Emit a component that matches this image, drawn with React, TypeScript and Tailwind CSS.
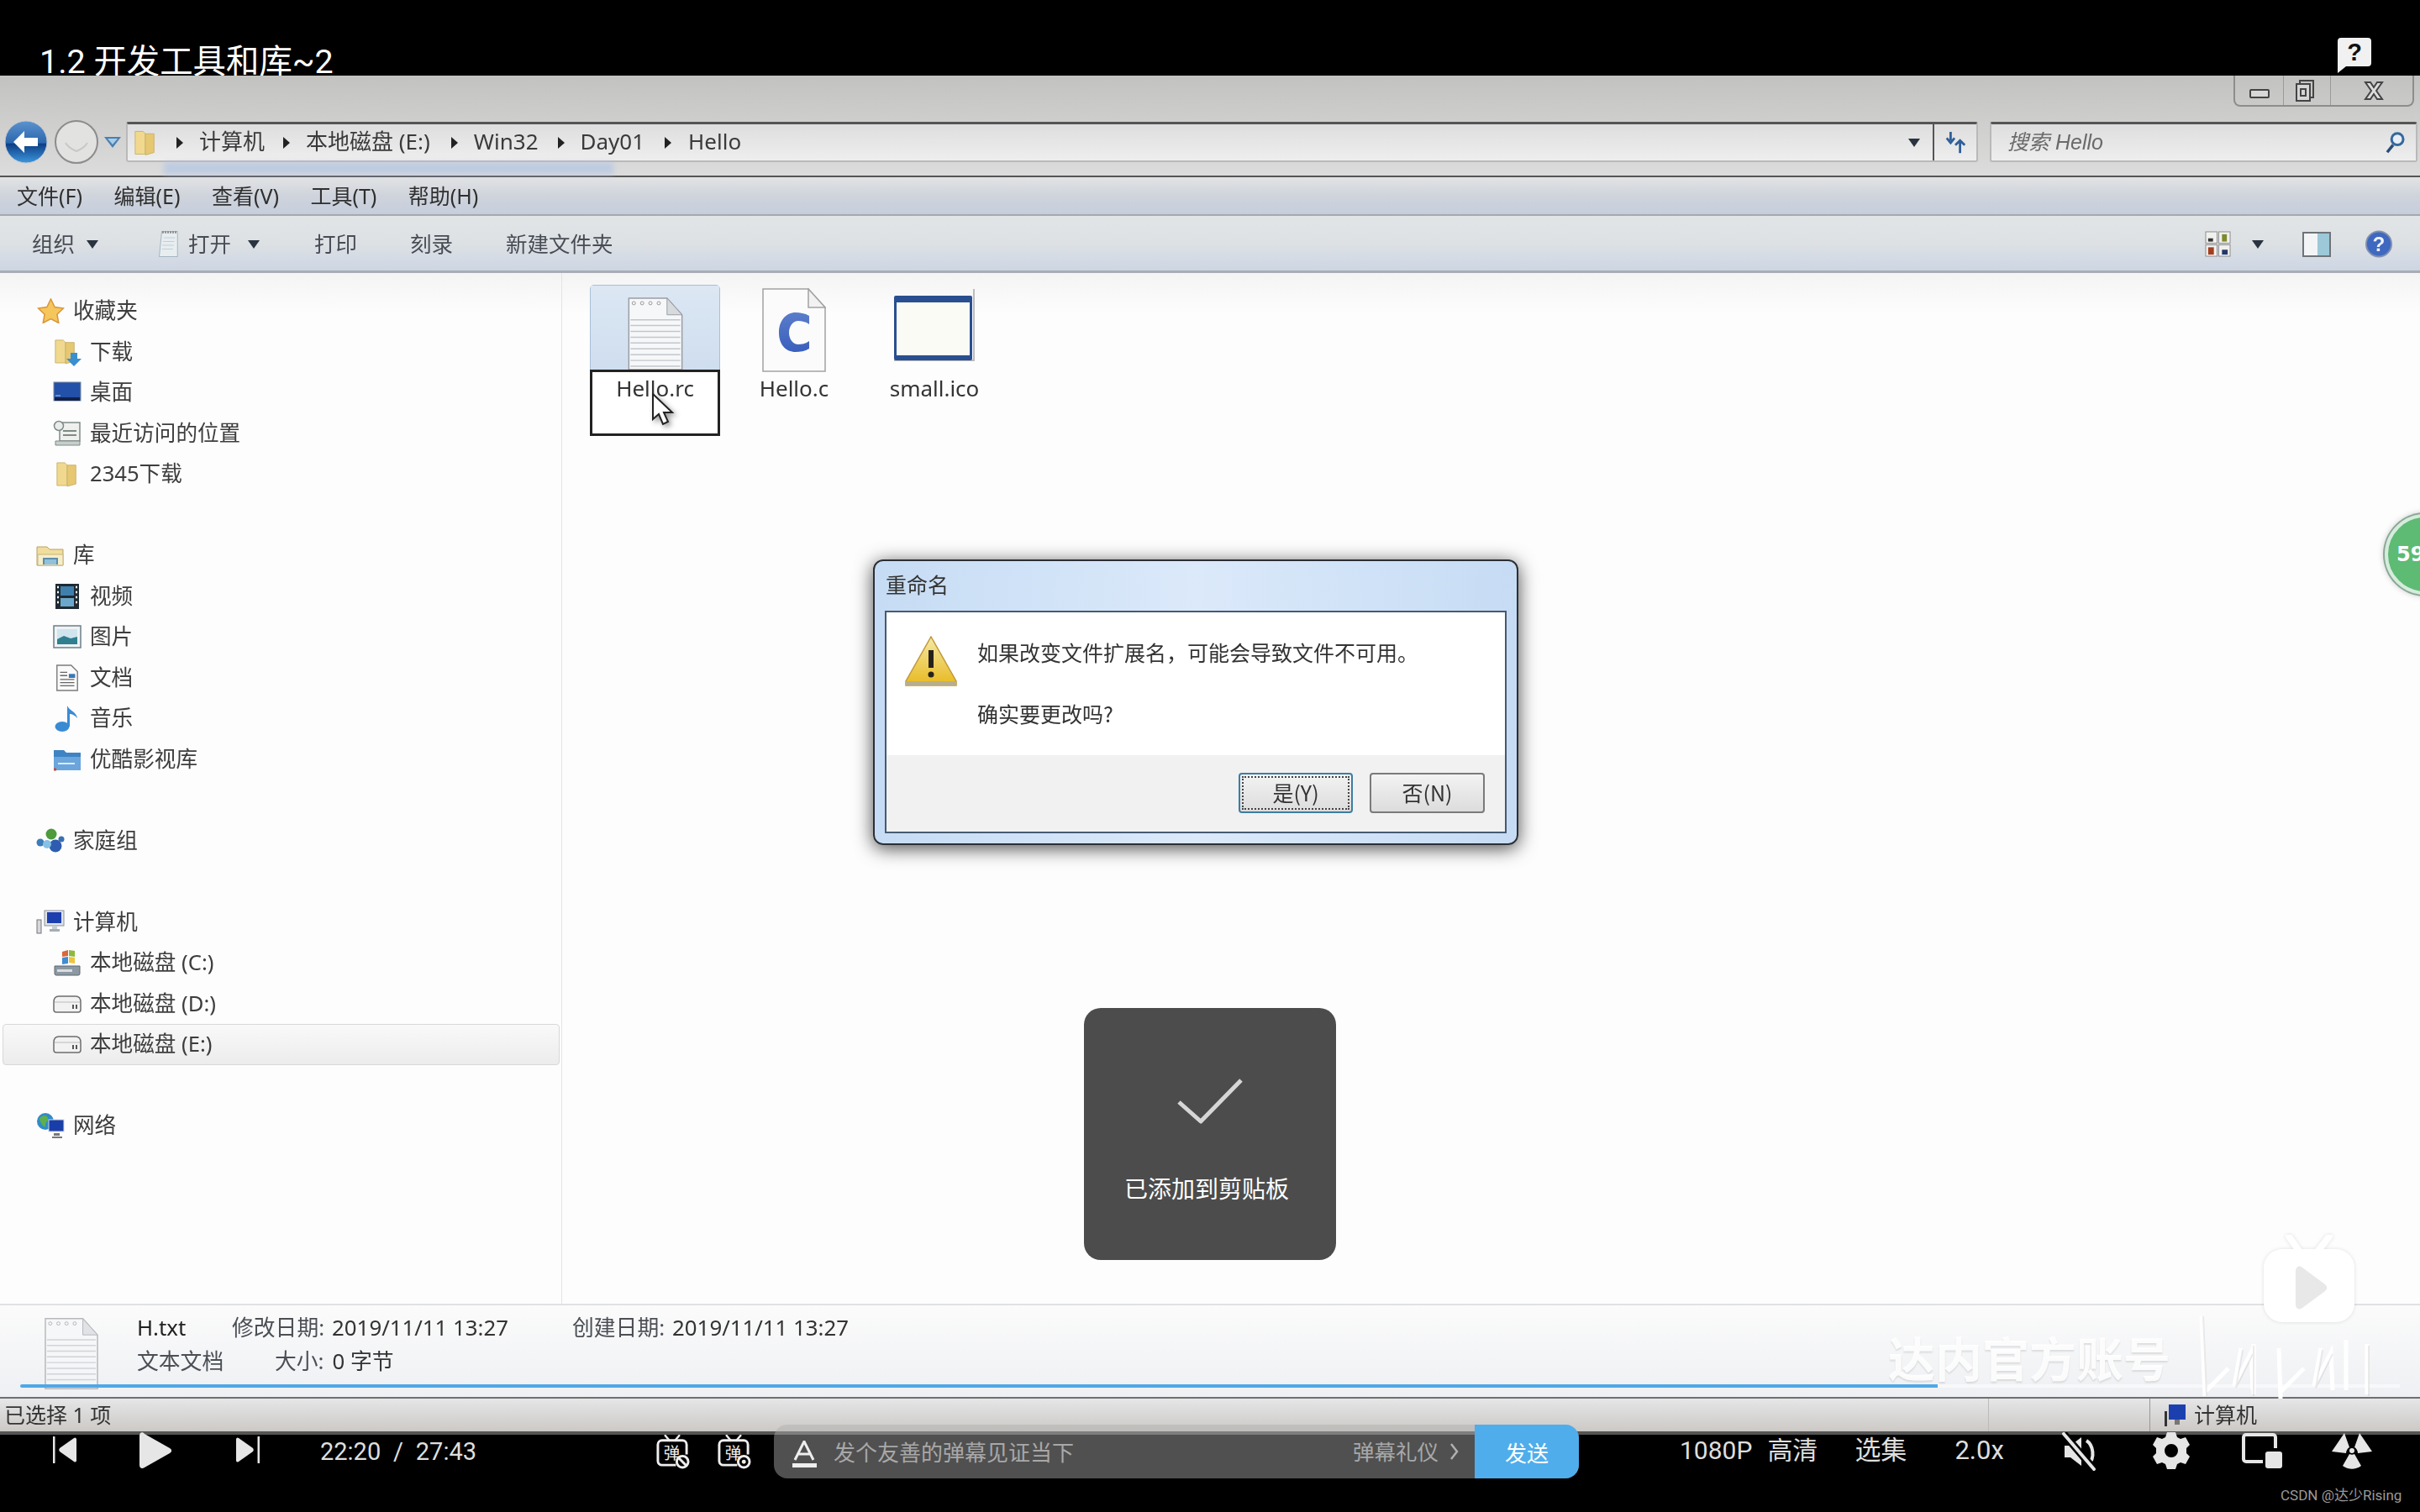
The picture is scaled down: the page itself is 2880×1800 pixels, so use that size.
import React from "react";

const Folder = ({ className = "" }: { className?: string }) => (
  <svg viewBox="0 0 30 34" className={className}>
    <path d="M2 3h10l3 3v26H2z" fill="#f0d98f" stroke="#c9b26a" />
    <path d="M15 6h11v24l-11 3z" fill="#e6c873" stroke="#c9b26a" />
  </svg>
);

const Star = () => (
  <svg viewBox="0 0 32 30" className="w-[33px] h-[30px]">
    <path d="M16 1l4.6 9.6 10.4 1.4-7.6 7.2 1.9 10.3L16 24.5l-9.3 5 1.9-10.3L1 12l10.4-1.4z" fill="#f5c65c" stroke="#d9953a" strokeWidth="1.5" />
  </svg>
);
const DownFolder = () => (
  <div className="relative w-[33px] h-[34px]">
    <Folder className="w-[28px] h-[32px]" />
    <svg viewBox="0 0 18 16" className="absolute right-0 bottom-0 w-[18px] h-[16px]"><path d="M5 0h8v7h5l-9 9-9-9h5z" fill="#3a8fd0" /></svg>
  </div>
);
const Desktop = () => (
  <svg viewBox="0 0 34 26" className="w-[34px] h-[26px]"><rect x="1" y="1" width="32" height="22" fill="#2350a8" stroke="#7a8aa0" /><rect x="2" y="19" width="30" height="4" fill="#10214d" /><path d="M3 17h6" stroke="#bcd" /></svg>
);
const Recent = () => (
  <svg viewBox="0 0 34 32" className="w-[34px] h-[32px]"><rect x="8" y="3" width="24" height="22" fill="#eef0ee" stroke="#7f8a86" strokeWidth="1.5" /><circle cx="7" cy="7" r="5.5" fill="#e8ecea" stroke="#7f8a86" strokeWidth="1.5" /><path d="M12 13h16M12 18h16" stroke="#7f8a86" strokeWidth="2" /><path d="M3 25h29v5H3z" fill="#c7cfcc" stroke="#7f8a86" /></svg>
);
const Library = () => (
  <svg viewBox="0 0 34 28" className="w-[34px] h-[28px]"><path d="M1 4h12l3 3h16v19H1z" fill="#f1dd9c" stroke="#b6a36a" /><path d="M2 13h30v13H2z" fill="#f6eecb" stroke="#c6b67c" /><path d="M9 25v-7h16v7" fill="#8fc1dd" stroke="#5c8faa" strokeWidth="2" /></svg>
);
const Film = () => (
  <svg viewBox="0 0 30 32" className="w-[30px] h-[32px]"><rect x="1" y="1" width="28" height="30" fill="#1f2a33" /><rect x="7" y="4" width="16" height="11" fill="#3f7fae" /><rect x="7" y="18" width="16" height="10" fill="#6ba7cb" /><path d="M3 5h2M3 11h2M3 17h2M3 23h2M25 5h2M25 11h2M25 17h2M25 23h2" stroke="#fff" strokeWidth="2.5" /></svg>
);
const Picture = () => (
  <svg viewBox="0 0 34 28" className="w-[34px] h-[28px]"><rect x="1" y="1" width="32" height="26" fill="#eef3f5" stroke="#6c7f88" strokeWidth="1.5" /><rect x="5" y="5" width="24" height="18" fill="#d0e5ee" /><path d="M5 17l8-4 8 3 8-2v9H5z" fill="#2f7f8f" /></svg>
);
const DocSmall = () => (
  <svg viewBox="0 0 28 34" className="w-[28px] h-[32px]"><path d="M1 1h18l8 8v24H1z" fill="#fafafa" stroke="#7c7c7c" strokeWidth="1.5" /><path d="M5 10h9M5 14h9M5 19h18M5 23h18M5 27h18" stroke="#666" strokeWidth="1.5" /><rect x="16" y="12" width="8" height="5" fill="#3a77b5" /></svg>
);
const Music = () => (
  <svg viewBox="0 0 30 34" className="w-[30px] h-[34px]"><ellipse cx="9" cy="27" rx="8.5" ry="6" fill="#3a8bd3" /><path d="M15 27V2c2 6 11 7 12 15-3-4-7-5-9-5v15z" fill="#3a8bd3" /></svg>
);
const BlueFolder = () => (
  <svg viewBox="0 0 34 28" className="w-[34px] h-[28px]"><path d="M1 6V3h12l3 3h17v21H1z" fill="#3e83c4" /><path d="M1 11h32v16H1z" fill="#6aa5dc" /><path d="M6 19h20" stroke="#dceaf8" strokeWidth="2" /><path d="M1 26h3" stroke="#c7483c" strokeWidth="3" /></svg>
);
const Home = () => (
  <svg viewBox="0 0 34 32" className="w-[34px] h-[32px]"><circle cx="5" cy="18" r="4.5" fill="#3b7db9" /><circle cx="18" cy="8" r="6.5" fill="#4f9a3d" /><circle cx="23" cy="22" r="7.5" fill="#2e5db0" /><circle cx="13" cy="20" r="5" fill="#86c0e4" /><circle cx="30" cy="14" r="3.5" fill="#3a6fb0" /></svg>
);
const Computer = () => (
  <svg viewBox="0 0 34 30" className="w-[34px] h-[30px]"><rect x="10" y="1" width="23" height="18" fill="#dfe3e8" stroke="#8a929c" /><rect x="13" y="3" width="17" height="13" fill="#1c3fb0" /><path d="M16 23h12v3H16z" fill="#a7adb5" /><path d="M19 19h6v4h-6z" fill="#c6ccd3" /><rect x="1" y="12" width="5" height="16" fill="#d5d8dc" stroke="#777" /></svg>
);
const DriveC = () => (
  <svg viewBox="0 0 34 32" className="w-[34px] h-[32px]"><path d="M2 20h30v9a2 2 0 01-2 2H4a2 2 0 01-2-2z" fill="#8c98a2" stroke="#5d6870" /><rect x="5" y="24" width="18" height="3" fill="#d8dde0" /><path d="M11 3l7-2v7l-7 1z" fill="#d9683a" /><path d="M19 1l7 1v7l-7-1z" fill="#8cb93f" /><path d="M11 10l7-1v8l-7 1z" fill="#3f8dd3" /><path d="M19 9l7 1v7l-7-1z" fill="#ecc43f" /></svg>
);
const Drive = () => (
  <svg viewBox="0 0 34 22" className="w-[34px] h-[22px]"><path d="M1 9c0-4 2-7 6-7h20c4 0 6 3 6 7v9a3 3 0 01-3 3H4a3 3 0 01-3-3z" fill="#f2f2f2" stroke="#6e6e6e" strokeWidth="1.5" /><path d="M2 9h30" stroke="#bbb" /><path d="M24 12v5M28 12v5" stroke="#555" strokeWidth="2" /></svg>
);
const Network = () => (
  <svg viewBox="0 0 34 32" className="w-[34px] h-[32px]"><circle cx="11" cy="11" r="10" fill="#2f8ccb" /><path d="M4 7c4-4 9-4 10 0s-4 5-3 9-6-1-7-9z" fill="#5fb04a" /><rect x="15" y="9" width="18" height="14" fill="#1a3ea8" stroke="#cfd6de" /><path d="M21 25h7v3h-7z" fill="#777" /><path d="M19 30h12" stroke="#777" strokeWidth="2" /></svg>
);

const Row = ({ indent, icon, label }: { indent?: boolean; icon: React.ReactNode; label: string }) => (
  <div className={indent ? "h-[48.5px] flex items-center pl-[62px]" : "h-[48.5px] flex items-center pl-[42px]"}>
    <div className="w-[36px] flex justify-center shrink-0">{icon}</div>
    <span className="ml-[9px] text-[25.6px] text-[#3d3d3d] whitespace-nowrap">{label}</span>
  </div>
);

const Gap = () => <div className="h-[48.5px]" />;

const Crumb = () => (
  <svg viewBox="0 0 8 14" className="w-[8px] h-[14px] shrink-0"><path d="M0 0l8 7-8 7z" fill="#222" /></svg>
);

const Caret = ({ className = "" }: { className?: string }) => (
  <svg viewBox="0 0 14 10" className={"w-[14px] h-[10px] shrink-0 " + className}><path d="M0 0h14L7 10z" fill="#2a3340" /></svg>
);

const NoteFile = ({ className = "" }: { className?: string }) => (
  <svg viewBox="0 0 66 88" className={className}>
    <path d="M1 2h46l18 20v66H1z" fill="#f6f7f8" stroke="#9a9da3" strokeWidth="1.5" />
    <path d="M47 2v20h18z" fill="#d7dadd" stroke="#9a9da3" />
    <path d="M3 28h60M3 35h60M3 42h60M3 49h60M3 56h60M3 63h60M3 70h60M3 77h60M3 84h60" stroke="#c2c6cc" strokeWidth="1.5" />
    <circle cx="7" cy="8" r="2" fill="none" stroke="#999" /><circle cx="17" cy="8" r="2" fill="none" stroke="#999" /><circle cx="27" cy="8" r="2" fill="none" stroke="#999" /><circle cx="37" cy="8" r="2" fill="none" stroke="#999" />
  </svg>
);

const CFile = () => (
  <svg viewBox="0 0 76 100" className="w-[76px] h-[100px]">
    <defs><linearGradient id="cf" x1="0" y1="0" x2="0" y2="1"><stop offset="0" stopColor="#5a7ccb" /><stop offset="1" stopColor="#3a5fbd" /></linearGradient></defs>
    <path d="M1 1h54l20 22v76H1z" fill="#fbfbfb" stroke="#a2a2a2" strokeWidth="1.5" />
    <path d="M55 1v22h20z" fill="#f2f2f2" stroke="#a2a2a2" strokeWidth="1.5" />
    <path d="M56 33c-5-3-11-4-16-4-12 0-20 10-20 24s8 23 20 23c5 0 11-1 16-4v-9c-4 3-9 4-13 4-6 0-11-6-11-14s5-14 11-14c4 0 9 1 13 4z" fill="url(#cf)" />
  </svg>
);

const WinIcon = () => (
  <div className="w-[96px] h-[86px] border-r-2 border-b-2 border-r-[#bdbdbd] border-b-[#bdbdbd]">
    <div className="w-[93px] h-[77px] mt-[8px] border-[3px] border-[#2a4f90] border-t-[8px] border-b-[6px] rounded-[2px] bg-[#fbfbf6]" />
  </div>
);

const Warn = () => (
  <svg viewBox="0 0 62 60" className="w-[62px] h-[60px]">
    <defs><linearGradient id="w" x1="0" y1="0" x2="0" y2="1"><stop offset="0" stopColor="#f5e9a8" /><stop offset="1" stopColor="#e8b91f" /></linearGradient></defs>
    <path d="M31 1L61 54v5H1v-5z" fill="url(#w)" stroke="#c09a3a" strokeWidth="1.5" />
    <path d="M1 54h60v5H1z" fill="#b8ad8c" />
    <path d="M28 17h6v21h-6z" fill="#26221a" /><circle cx="31" cy="46" r="3.5" fill="#26221a" />
  </svg>
);

const Danmu = ({ variant }: { variant: "off" | "on" }) => (
  <svg viewBox="0 0 42 42" className="w-[41px] h-[41px]">
    <path d="M12 1l5 6M29 1l-5 6" stroke="#eee" strokeWidth="2.5" strokeLinecap="round" />
    <path d="M25 37H8a5 5 0 01-5-5V12a5 5 0 015-5h25a5 5 0 015 5v12" fill="none" stroke="#eee" strokeWidth="3" />
    <text x="10" y="30" fontSize="20" fill="#eee" fontFamily="Noto Sans CJK SC">弹</text>
    <circle cx="33" cy="33" r="7" fill="#000" stroke="#eee" strokeWidth="3" />
    {variant === "off" ? <path d="M28 28l10 10" stroke="#eee" strokeWidth="3" /> : <circle cx="33" cy="33" r="2.5" fill="#eee" />}
  </svg>
);

export default function App() {
  return (
    <div className="relative w-[2880px] h-[1800px] overflow-hidden bg-black flex flex-col font-['Noto_Sans','Noto_Sans_CJK_SC',sans-serif]">
      {/* video title strip */}
      <div className="h-[90px] shrink-0 overflow-hidden flex justify-between">
        <div className="pl-[47px] pt-[48px] text-white text-[39.4px] leading-[52px] whitespace-nowrap font-['Roboto','Noto_Sans_CJK_SC',sans-serif]">1.2 开发工具和库~2</div>
        <div className="pt-[45px] pr-[58px]">
          <svg viewBox="0 0 40 42" className="w-[40px] h-[42px]">
            <path d="M4 0h32a4 4 0 014 4v26a4 4 0 01-4 4H10l-10 8V4a4 4 0 014-4z" fill="#f1f1f1" />
            <text x="20" y="27" textAnchor="middle" fontSize="29" fontWeight="700" fill="#111" fontFamily="Liberation Sans">?</text>
          </svg>
        </div>
      </div>

      {/* explorer window */}
      <div className="h-[1618px] shrink-0 flex flex-col blur-[0.6px] bg-white">
        {/* title + address */}
        <div className="relative h-[119px] shrink-0 bg-gradient-to-b from-[#c2c2c0] to-[#dcdcdc]">
          <div className="h-[55px] flex justify-end pr-[7px]">
            <div className="w-[215px] h-[37px] flex border-2 border-t-0 border-[#8d8d8d] rounded-b-[8px]">
              <div className="w-[58px] flex items-end justify-center pb-[8px] border-r border-[#9a9a9a]">
                <div className="w-[24px] h-[11px] border-2 border-[#444] rounded-[2px] bg-[#d8d8d8]" />
              </div>
              <div className="w-[56px] flex items-center justify-center border-r border-[#9a9a9a] pr-[6px]">
                <svg viewBox="0 0 24 26" className="w-[24px] h-[26px]"><path d="M6 5V1h16v20h-4" fill="none" stroke="#444" strokeWidth="2" /><rect x="2" y="5" width="16" height="20" fill="#d5d5d5" stroke="#444" strokeWidth="2" /><rect x="7" y="11" width="6" height="8" fill="none" stroke="#444" strokeWidth="2" /></svg>
              </div>
              <div className="flex-1 flex items-center justify-center pl-[4px]">
                <svg viewBox="0 0 24 22" className="w-[24px] h-[22px]"><path d="M2 1h6l4 6 4-6h6l-7 10 7 10h-6l-4-6-4 6H2l7-10z" fill="#dcdcdc" stroke="#444" strokeWidth="2" /></svg>
              </div>
            </div>
          </div>
          <div className="h-[48px] flex items-center pl-[6px] pr-[3px]">
            <svg viewBox="0 0 112 52" className="w-[112px] h-[52px] shrink-0">
              <defs><linearGradient id="bk" x1="0" y1="0" x2="0" y2="1"><stop offset="0" stopColor="#5c93cf" /><stop offset="0.52" stopColor="#2c67ad" /><stop offset="0.55" stopColor="#0d3f86" /><stop offset="1" stopColor="#3d96dc" /></linearGradient></defs>
              <circle cx="85" cy="26" r="25" fill="#e2e2e0" stroke="#8c8c8c" strokeWidth="2" />
              <path d="M72 27c4 7 9 8 13 10 4-2 9-3 13-10" fill="none" stroke="#c8c8c8" strokeWidth="2" />
              <circle cx="25" cy="26" r="25" fill="url(#bk)" stroke="#c2c6cc" strokeWidth="1" />
              <path d="M10 26l13-13v8h16v10H23v8z" fill="#fff" />
            </svg>
            <svg viewBox="0 0 20 13" className="w-[20px] h-[13px] ml-[6px] mr-[6px] shrink-0"><path d="M0 0h20L10 13z" fill="#4a7fb0" /><path d="M4 2h12l-6 7z" fill="#a7cdea" /></svg>
            <div className="flex-1 h-[48px] flex items-center border-2 border-t-[3px] border-[#b9b9b9] border-t-[#555] bg-gradient-to-b from-[#dedede] to-[#eeeeee] rounded-[3px] pl-[7px] text-[26px] text-[#3a3a3a]">
              <Folder className="w-[28px] h-[33px] shrink-0" />
              <div className="flex items-center whitespace-nowrap ml-[23px]">
                <Crumb /><span className="ml-[19px] pb-[3px]">计算机</span>
              </div>
              <div className="flex items-center whitespace-nowrap ml-[22px]">
                <Crumb /><span className="ml-[19px] pb-[3px]">本地磁盘 (E:)</span>
              </div>
              <div className="flex items-center whitespace-nowrap ml-[25px]">
                <Crumb /><span className="ml-[19px] pb-[3px]">Win32</span>
              </div>
              <div className="flex items-center whitespace-nowrap ml-[23px]">
                <Crumb /><span className="ml-[19px] pb-[3px]">Day01</span>
              </div>
              <div className="flex items-center whitespace-nowrap ml-[24px]">
                <Crumb /><span className="ml-[20px] pb-[3px]">Hello</span>
              </div>
              <div className="flex-1" />
              <Caret className="mr-[15px]" />
              <div className="w-[52px] h-full flex items-center justify-center border-l-2 border-[#555]">
                <svg viewBox="0 0 30 30" className="w-[30px] h-[28px]"><path d="M9 1v11M4 9l5 6 5-6" fill="none" stroke="#2f5f98" strokeWidth="3" /><path d="M21 28V14M15 18l6-6 6 6" fill="none" stroke="#2f5f98" strokeWidth="3" /></svg>
              </div>
            </div>
            <div className="w-[509px] h-[48px] ml-[14px] shrink-0 flex items-center justify-between border-2 border-t-[3px] border-[#b9b9b9] border-t-[#555] bg-gradient-to-b from-[#dedede] to-[#eeeeee] rounded-[3px] pl-[19px] pr-[12px]">
              <span className="italic text-[25px] text-[#6a6a6a] font-['Liberation_Sans','Noto_Sans_CJK_SC',sans-serif]">搜索 Hello</span>
              <svg viewBox="0 0 26 30" className="w-[25px] h-[26px]"><circle cx="16" cy="10" r="8" fill="#e7eef5" stroke="#34689d" strokeWidth="3.5" /><path d="M10 18L2 28" stroke="#2a4c75" strokeWidth="4" /></svg>
            </div>
          </div>
          <div className="absolute left-[195px] top-[103px] w-[535px] h-[15px] blur-[3px] bg-[#abc3e6]/60" />
        </div>

        {/* menu bar */}
        <div className="h-[48px] shrink-0 flex items-center pl-[20px] pt-[2px] gap-[37.5px] border-t-2 border-b-2 border-t-[#555] border-b-[#a5a9b0] bg-gradient-to-b from-[#e2e3e4] via-[#cfd4dc] to-[#c6cedd] text-[25px] text-[#2f2f2f]">
          <span>文件(F)</span><span>编辑(E)</span><span>查看(V)</span><span>工具(T)</span><span>帮助(H)</span>
        </div>

        {/* command bar */}
        <div className="h-[68px] shrink-0 flex items-center pl-[38px] pr-[32px] pt-[2px] border-b-[3px] border-b-[#a9adb3] bg-gradient-to-b from-[#e2e5e6] via-[#dde1e4] to-[#cdd6e4] text-[25.5px] text-[#474c55]">
          <span>组织</span>
          <Caret className="ml-[14px]" />
          <svg viewBox="0 0 30 44" className="w-[30px] h-[33px] ml-[68px]"><path d="M5 2h25v40H1z" fill="#e8edf0" stroke="#8fa5b4" /><path d="M7 2v3M11 2v3M15 2v3M19 2v3M23 2v3M27 2v3" stroke="#444" strokeWidth="1.5" /><path d="M8 12h18M7 18h18M6 24h18M5 30h18" stroke="#b4c4d0" /></svg>
          <span className="ml-[9px]">打开</span>
          <Caret className="ml-[20px]" />
          <span className="ml-[65px]">打印</span>
          <span className="ml-[63px]">刻录</span>
          <span className="ml-[63px]">新建文件夹</span>
          <div className="flex-1" />
          <svg viewBox="0 0 32 32" className="w-[31px] h-[31px]"><rect x="1" y="1" width="14" height="14" fill="#f0f0ee" stroke="#8c8c8c" /><rect x="17" y="1" width="14" height="14" fill="#f0f0ee" stroke="#8c8c8c" /><rect x="1" y="17" width="14" height="14" fill="#f0f0ee" stroke="#8c8c8c" /><rect x="17" y="17" width="14" height="14" fill="#f0f0ee" stroke="#8c8c8c" /><rect x="4" y="9" width="6" height="4" fill="#333" /><rect x="21" y="4" width="6" height="9" fill="#7d8a2e" /><rect x="4" y="20" width="7" height="9" fill="#a33e1e" /><rect x="21" y="23" width="7" height="6" fill="#24386a" /></svg>
          <Caret className="ml-[25px]" />
          <div className="w-[34px] h-[30px] ml-[46px] flex border-2 border-[#6e7378] bg-[#f2f4f6]"><div className="flex-1" /><div className="w-[14px] bg-[#9cc8d8]" /></div>
          <svg viewBox="0 0 34 34" className="w-[34px] h-[33px] ml-[40px]"><circle cx="17" cy="17" r="15.5" fill="#3f68c0" stroke="#8090b0" strokeWidth="2" /><text x="17" y="26" textAnchor="middle" fontSize="25" fontWeight="700" fill="#eef2fa" fontFamily="Liberation Sans">?</text></svg>
        </div>

        {/* main */}
        <div className="h-[1227px] shrink-0 flex bg-gradient-to-b from-[#f4f4f4] via-[#fdfdfd] via-[4%] to-[#fdfdfd]">
          <div className="w-[669px] shrink-0 pt-[21px] border-r border-[#e4e4e4] relative">
            <Row icon={<Star />} label="收藏夹" />
            <Row indent icon={<DownFolder />} label="下载" />
            <Row indent icon={<Desktop />} label="桌面" />
            <Row indent icon={<Recent />} label="最近访问的位置" />
            <Row indent icon={<Folder className="w-[28px] h-[32px]" />} label="2345下载" />
            <Gap />
            <Row icon={<Library />} label="库" />
            <Row indent icon={<Film />} label="视频" />
            <Row indent icon={<Picture />} label="图片" />
            <Row indent icon={<DocSmall />} label="文档" />
            <Row indent icon={<Music />} label="音乐" />
            <Row indent icon={<BlueFolder />} label="优酷影视库" />
            <Gap />
            <Row icon={<Home />} label="家庭组" />
            <Gap />
            <Row icon={<Computer />} label="计算机" />
            <Row indent icon={<DriveC />} label="本地磁盘 (C:)" />
            <Row indent icon={<Drive />} label="本地磁盘 (D:)" />
            <div className="ml-[3px] mr-[2px] rounded-[4px] border border-[#d8d8d8] bg-gradient-to-b from-[#f9f9f9] to-[#ececec]">
              <div className="h-[46.5px] flex items-center pl-[58px]">
                <div className="w-[36px] flex justify-center shrink-0"><Drive /></div>
                <span className="ml-[9px] text-[25.6px] text-[#3d3d3d] whitespace-nowrap">本地磁盘 (E:)</span>
              </div>
            </div>
            <Gap />
            <Row icon={<Network />} label="网络" />
          </div>
          <div className="flex-1 flex items-start pl-[33px] pt-[14px]">
            <div className="w-[155px] h-[180px] flex flex-col rounded-t-[5px] border-t border-x border-[#a9bfd8]">
              <div className="h-[100px] shrink-0 bg-gradient-to-b from-[#dce7f3] to-[#cfdeef] flex justify-center items-end">
                <NoteFile className="w-[66px] h-[87px]" />
              </div>
              <div className="flex-1 -mx-px border-[3px] border-[#222] bg-white flex justify-center pt-px text-[26px] leading-[36px] text-[#333]">Hello.rc</div>
            </div>
            <div className="w-[100px] ml-[38px] pt-[4px] flex flex-col items-center text-[26px] leading-[36px] text-[#333]">
              <CFile />
              <span className="mt-px">Hello.c</span>
            </div>
            <div className="w-[130px] ml-[52px] pt-[5px] flex flex-col items-center text-[26px] leading-[36px] text-[#333]">
              <WinIcon />
              <span className="mt-[14px]">small.ico</span>
            </div>
          </div>
        </div>

        {/* details pane */}
        <div className="h-[111px] shrink-0 relative flex border-t-2 border-[#dfe1e4] bg-gradient-to-b from-[#fbfbfb] to-[#eef0f3] text-[25.8px] text-[#4b4f55]">
          <NoteFile className="w-[64px] h-[87px] ml-[53px] mt-[13px] shrink-0 opacity-70" />
          <div className="ml-[46px] pt-[9px] flex flex-col gap-[6px] leading-[34px] whitespace-nowrap">
            <div className="flex">
              <span className="w-[113px] text-[#222]">H.txt</span>
              <span>修改日期:</span>
              <span className="ml-[9px] text-[#333]">2019/11/11 13:27</span>
              <span className="ml-[76px]">创建日期:</span>
              <span className="ml-[9px] text-[#333]">2019/11/11 13:27</span>
            </div>
            <div className="flex">
              <span className="w-[164px]">文本文档</span>
              <span>大小:</span>
              <span className="ml-[10px] text-[#333]">0 字节</span>
            </div>
          </div>
          <div className="absolute left-[24px] top-[94px] w-[2832px] h-[4px] flex">
            <div className="w-[2282px] bg-[#4fa8e6] rounded-l-full" />
            <div className="flex-1 bg-white/50" />
          </div>
        </div>

        {/* status bar */}
        <div className="h-[45px] shrink-0 flex items-center border-t-2 border-b-[4px] border-t-[#6f6f6f] border-b-[#555] bg-gradient-to-b from-[#e6e6e8] to-[#ccc9c5] text-[25px] text-[#333] whitespace-nowrap">
          <span className="pl-[5px] w-[2366px]">已选择 1 项</span>
          <div className="h-full w-[192px] border-l border-[#bbb]" />
          <div className="h-full flex items-center gap-[9px] border-l border-[#999] pl-[17px]">
            <svg viewBox="0 0 26 30" className="w-[26px] h-[30px]"><rect x="5" y="2" width="20" height="18" fill="#1c3fb0" /><path d="M12 20h6v6h-6z" fill="#777" /><rect x="0" y="10" width="3" height="18" fill="#333" /></svg>
            <span>计算机</span>
          </div>
        </div>
      </div>

      {/* player controls */}
      <div className="relative z-10 h-[92px] shrink-0 flex items-start text-[#dedede] font-['Roboto','Noto_Sans_CJK_SC',sans-serif] whitespace-nowrap">
        <svg viewBox="0 0 30 32" className="w-[30px] h-[32px] ml-[63px] mt-[2px] shrink-0"><path d="M1 1v30" stroke="#e6e6e6" strokeWidth="3" strokeLinecap="round" /><path d="M28 3v26a2 2 0 01-3 1L8 18a3 3 0 010-4L25 2a2 2 0 013 1z" fill="#e6e6e6" /></svg>
        <svg viewBox="0 0 38 44" className="w-[38px] h-[44px] ml-[73px] -mt-[3px] shrink-0"><path d="M0 4c0-4 4-5 6-2l30 17c3 2 3 4 0 6L6 42c-3 2-6 1-6-3z" fill="#e6e6e6" /></svg>
        <svg viewBox="0 0 30 32" className="w-[30px] h-[32px] ml-[75px] mt-[2px] shrink-0"><path d="M29 1v30" stroke="#e6e6e6" strokeWidth="3" strokeLinecap="round" /><path d="M2 3v26a2 2 0 003 1l17-12a3 3 0 000-4L5 2a2 2 0 00-3 1z" fill="#e6e6e6" /></svg>
        <div className="ml-[72px] w-[186px] mt-[1px] text-[29px] leading-[38px] flex justify-between shrink-0"><span>22:20</span><span>/</span><span>27:43</span></div>
        <div className="ml-[213px] shrink-0"><Danmu variant="off" /></div>
        <div className="ml-[32px] shrink-0"><Danmu variant="on" /></div>
        <div className="ml-[27px] w-[958px] h-[64px] -mt-[12px] shrink-0 rounded-[16px] overflow-hidden flex items-center bg-[rgba(175,175,175,0.46)]">
          <div className="ml-[22px] w-[29px] h-[32px] mt-[6px] shrink-0">
            <svg viewBox="0 0 29 32" className="w-[29px] h-[32px]"><path d="M3 23L14 1l11 22M7 16h15" fill="none" stroke="#eee" strokeWidth="3" /><rect x="0" y="27" width="29" height="5" fill="#eee" /></svg>
          </div>
          <span className="ml-[20px] -mt-px text-[26px] text-[#a8a8a8] font-['Noto_Sans_CJK_SC',sans-serif]">发个友善的弹幕见证当下</span>
          <div className="flex-1" />
          <span className="-mt-px text-[25.5px] text-[#a8a8a8] font-['Noto_Sans_CJK_SC',sans-serif]">弹幕礼仪</span>
          <svg viewBox="0 0 10 20" className="w-[10px] h-[20px] ml-[14px] mr-[19px]"><path d="M1 1l7 9-7 9" fill="none" stroke="#b0b0b0" strokeWidth="2.5" /></svg>
          <div className="w-[124px] h-full bg-[#4fadeb] flex items-center justify-center text-white text-[26px] font-['Noto_Sans_CJK_SC',sans-serif]">发送</div>
        </div>
        <div className="ml-[120px] text-[30px] leading-[38px] shrink-0">1080P<span className="ml-[18px]">高清</span></div>
        <span className="ml-[44px] text-[31px] leading-[38px] shrink-0">选集</span>
        <span className="ml-[57px] text-[31px] leading-[38px] shrink-0">2.0x</span>
        <svg viewBox="0 0 42 46" className="w-[42px] h-[46px] ml-[69px] -mt-[3px] shrink-0">
          <path d="M4 16h7l13-10v34L11 30H4z" fill="#e6e6e6" transform="translate(-1 0)" />
          <path d="M29 10c8 5 11 21 2 28" fill="none" stroke="#e6e6e6" strokeWidth="4" />
          <path d="M2 2l36 42" stroke="#000" strokeWidth="9" />
          <path d="M2 2l36 42" stroke="#e6e6e6" strokeWidth="4" strokeLinecap="round" />
        </svg>
        <svg viewBox="0 0 46 44" className="w-[46px] h-[44px] ml-[65px] -mt-[3px] shrink-0">
          <path fillRule="evenodd" d="M18 0h10l2 6 4 2 6-2 5 9-4 4v6l4 4-5 9-6-2-4 2-2 6H18l-2-6-4-2-6 2-5-9 4-4v-6l-4-4 5-9 6 2 4-2zM23 14a8 8 0 100 16 8 8 0 000-16z" fill="#e6e6e6" />
        </svg>
        <svg viewBox="0 0 48 42" className="w-[48px] h-[42px] ml-[61px] -mt-[2px] shrink-0">
          <path d="M40 18V5a3 3 0 00-3-3H5a3 3 0 00-3 3v26a3 3 0 003 3h20" fill="none" stroke="#e6e6e6" strokeWidth="4" />
          <rect x="28" y="22" width="20" height="20" rx="3" fill="#e6e6e6" />
        </svg>
        <svg viewBox="0 0 48 44" className="w-[48px] h-[44px] ml-[59px] -mt-[3px] shrink-0">
          <path d="M15 1L0 23l17 2c0-3 2-6 4-7zM33 1l15 22-17 2c0-3-2-6-4-7zM13 40c7 5 15 5 22 0l-8-14c-2 1-4 1-6 0z" fill="#e6e6e6" />
          <circle cx="24" cy="22" r="3" fill="#e6e6e6" />
        </svg>
      </div>

      {/* cursor */}
      <svg viewBox="0 0 30 42" className="absolute left-[775px] top-[468px] w-[30px] h-[42px] drop-shadow-[3px_3px_3px_rgba(0,0,0,0.4)]">
        <path d="M2 1v30l7-6 5 12 6-3-5-11h10z" fill="#fff" stroke="#222" strokeWidth="2" />
      </svg>

      {/* floating timer */}
      <div className="absolute left-[2838px] top-[612px] w-[96px] h-[96px] rounded-full bg-[#5dbb74] border-[4px] border-[#d5ecdc] shadow-[0_0_0_2px_#8aa895,0_0_8px_rgba(0,0,0,0.3)] flex items-center pl-[10px] overflow-hidden">
        <span className="text-white font-bold text-[24px] font-['DejaVu_Sans',sans-serif]">59</span>
      </div>

      {/* rename dialog */}
      <div className="absolute left-[1039px] top-[666px] w-[768px] h-[340px] rounded-[12px] border-2 border-[#2b2f35] bg-gradient-to-r from-[#c6dcf4] via-[#dbe9fa] to-[#c6dcf4] shadow-[0_4px_22px_rgba(0,0,0,0.7)] flex flex-col blur-[0.5px]">
        <div className="h-[59px] shrink-0 flex items-center pl-[13px] pb-[4px] text-[25px] text-[#333] font-['Noto_Sans_CJK_SC',sans-serif]">重命名</div>
        <div className="mx-[12px] flex-1 mb-[12px] border-2 border-[#465a72] bg-white flex flex-col font-['Noto_Sans_CJK_SC',sans-serif] text-[#333]">
          <div className="h-[170px] shrink-0 flex pl-[22px] pt-[28px]">
            <Warn />
            <div className="ml-[24px] text-[25px] leading-[34px] mt-[2px]">
              <div>如果改变文件扩展名，可能会导致文件不可用。</div>
              <div className="mt-[39px]">确实要更改吗?</div>
            </div>
          </div>
          <div className="flex-1 bg-[#f1f1f1] flex justify-end items-start pt-[21px] pr-[24px] gap-[20px] text-[25px]">
            <div className="w-[136px] h-[48px] rounded-[4px] border-2 border-[#3d7da3] bg-gradient-to-b from-[#f3f3f3] to-[#dcdcdc] p-[2px]">
              <div className="w-full h-full border-2 border-dotted border-[#444] flex items-center justify-center">是(Y)</div>
            </div>
            <div className="w-[137px] h-[48px] rounded-[4px] border-2 border-[#7a7a7a] bg-gradient-to-b from-[#f3f3f3] to-[#dcdcdc] flex items-center justify-center">否(N)</div>
          </div>
        </div>
      </div>

      {/* toast */}
      <div className="absolute left-[1290px] top-[1200px] w-[300px] h-[300px] rounded-[20px] bg-[#4c4c4c] flex flex-col items-center font-['Noto_Sans_CJK_SC',sans-serif]">
        <svg viewBox="0 0 78 54" className="w-[78px] h-[54px] mt-[84px]"><path d="M2 28l26 23L76 2" fill="none" stroke="#d6d6d6" strokeWidth="5" strokeLinejoin="round" /></svg>
        <span className="mt-[56px] mr-[8px] text-[28px] leading-[40px] text-white">已添加到剪贴板</span>
      </div>

      {/* video watermarks */}
      <span className="absolute left-[2247px] top-[1580px] text-[56px] leading-[70px] text-white/90 font-bold font-['Noto_Sans_CJK_SC',sans-serif] whitespace-nowrap [text-shadow:0_2px_2px_rgba(0,0,0,0.1)]">达内官方账号</span>
      <svg viewBox="0 0 220 110" className="absolute left-[2612px] top-[1565px] w-[220px] h-[110px]">
        <path d="M8 2l4 95M12 92l28-28M55 40l-8 45 20-40 2 45M70 35v60M100 40l2 60M102 92l28-28M150 40l-8 45 20-40 2 45M180 30v60M205 35v60" fill="none" stroke="#fff" strokeWidth="5" />
        <path d="M10 2l4 95M57 42l-8 45 20-40M70 37v60M152 42l-8 45 20-40M207 37v60" fill="none" stroke="#000" strokeOpacity="0.08" strokeWidth="2" />
      </svg>
      <div className="absolute left-[2694px] top-[1470px] w-[108px] h-[104px] drop-shadow-[0_0_2px_rgba(0,0,0,0.12)]">
        <svg viewBox="0 0 108 104" className="w-[108px] h-[104px]">
          <path d="M30 2l14 20M78 2L64 20" stroke="#fff" strokeWidth="8" strokeLinecap="round" />
          <rect x="0" y="17" width="108" height="87" rx="22" fill="#fff" />
          <path d="M38 44c0-6 4-8 8-5l27 20c3 3 3 5 0 8L46 87c-4 3-8 1-8-4z" fill="#e8e8e8" />
        </svg>
      </div>
      <span className="absolute left-[2714px] top-[1769px] text-[17px] leading-[22px] text-[#9a9a9a] font-['Roboto','Noto_Sans_CJK_SC',sans-serif] whitespace-nowrap">CSDN @达少Rising</span>
    </div>
  );
}
